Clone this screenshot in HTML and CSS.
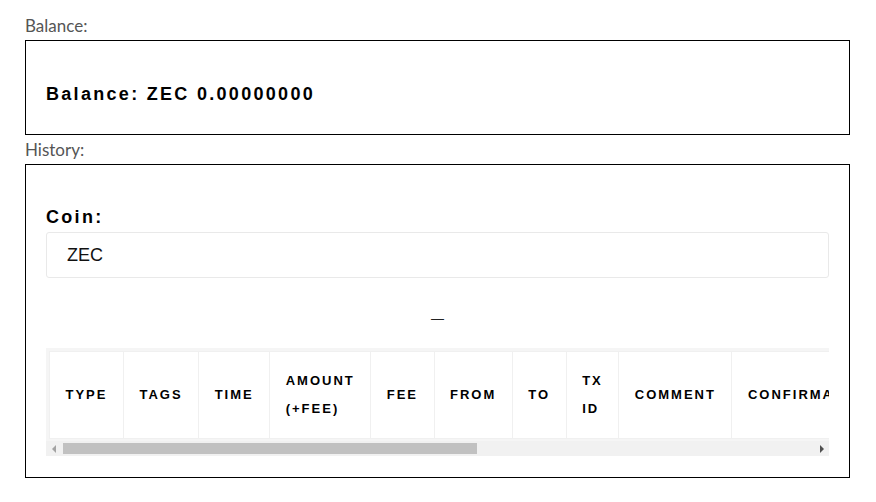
FILE: index.html
```html
<!DOCTYPE html>
<html lang="en">
<head>
    <meta charset="UTF-8">
    <meta name="viewport" content="width=device-width, initial-scale=1.0">
    <title>Wallet</title>
    <link rel="stylesheet" href="styles.css">
</head>
<body>
    <div class="field-label">Balance:</div>
    <div class="panel balance-panel">
        <h3 class="panel-title">Balance: ZEC 0.00000000</h3>
    </div>

    <div class="field-label">History:</div>
    <div class="panel history-panel">
        <h3 class="panel-title">Coin:</h3>
        <input class="coin-input" type="text" value="ZEC" readonly>

        <div class="empty-mark">&mdash;</div>

        <div class="table-wrap">
            <div class="table-scroll">
                <table class="history-table">
                    <thead>
                        <tr>
                            <th>Type</th>
                            <th>Tags</th>
                            <th>Time</th>
                            <th>Amount (+fee)</th>
                            <th>Fee</th>
                            <th>From</th>
                            <th>To</th>
                            <th>Tx ID</th>
                            <th>Comment</th>
                            <th>Confirmations</th>
                            <th>Status</th>
                            <th>Block</th>
                            <th>Description</th>
                            <th>Explorer</th>
                            <th>Actions</th>
                        </tr>
                    </thead>
                </table>
            </div>
            <div class="scrollbar">
                <span class="scroll-btn scroll-left"></span>
                <div class="scroll-track">
                    <div class="scroll-thumb"></div>
                </div>
                <span class="scroll-btn scroll-right"></span>
            </div>
        </div>
    </div>
</body>
</html>
```

FILE: styles.css
```css
body {
    margin: 0;
    padding: 11px 26px 0 25px;
    background-color: #fff;
    font-family: "Liberation Sans", Arial, sans-serif;
    color: #111;
}
.field-label {
    font-family: Lato, "Open Sans", sans-serif;
    font-size: 17px;
    line-height: 25px;
    padding: 2px 0;
    color: #555;
}
.panel {
    border: 1px solid #000;
    padding: 0 20px;
}
.balance-panel {
    padding-top: 43px;
    padding-bottom: 29px;
}
.history-panel {
    padding-top: 42px;
    padding-bottom: 21px;
}
.panel-title {
    margin: 0;
    font-size: 18px;
    line-height: 21px;
    font-weight: bold;
    letter-spacing: 2.3px;
    color: #000;
}
.coin-input {
    display: block;
    box-sizing: border-box;
    width: 100%;
    height: 46px;
    margin-top: 4px;
    padding: 0 20px;
    border: 1px solid #e9e9e9;
    border-radius: 3px;
    font-family: "Liberation Sans", Arial, sans-serif;
    font-size: 18px;
    color: #111;
    outline: none;
}
.empty-mark {
    margin-top: 33px;
    font-size: 13px;
    line-height: 15px;
    text-align: center;
    color: #222;
}
.table-wrap {
    margin-top: 22px;
    background-color: #f5f5f5;
}
.table-scroll {
    padding: 3px 3px 2px;
    overflow: hidden;
}
.history-table {
    width: 1px;
    border-collapse: collapse;
    background-color: #fff;
}
.history-table th {
    padding: 15px 15.5px;
    border: 1px solid #f0f0f0;
    font-size: 13px;
    line-height: 28px;
    font-weight: bold;
    letter-spacing: 2px;
    text-transform: uppercase;
    text-align: left;
    color: #000;
}

/* fake horizontal scrollbar (classic style) */
.scrollbar {
    display: flex;
    height: 15px;
    background-color: #f1f1f1;
}
.scroll-btn {
    width: 15px;
    flex: none;
    display: flex;
    align-items: center;
    justify-content: center;
}
.scroll-btn::before {
    content: "";
    width: 0;
    height: 0;
    border-top: 4px solid transparent;
    border-bottom: 4px solid transparent;
}
.scroll-left::before {
    border-right: 4px solid #a3a3a3;
}
.scroll-right::before {
    border-left: 4px solid #505050;
}
.scroll-track {
    flex: 1;
    padding: 2px 0 2px 2px;
}
.scroll-thumb {
    width: 414px;
    height: 11px;
    background-color: #c1c1c1;
}
```
